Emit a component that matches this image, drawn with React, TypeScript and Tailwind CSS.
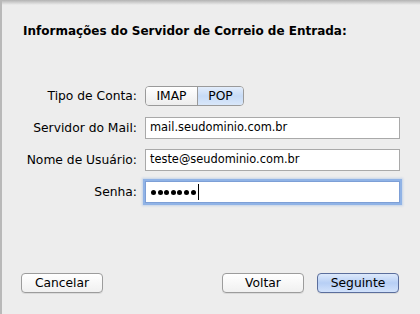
import React from "react";

const font = { fontFamily: '"DejaVu Sans", "Lucida Grande", sans-serif' };

function Field({ label, children }: { label: string; children: React.ReactNode }) {
  return (
    <div className="flex items-center h-[22px]">
      <div className="w-[143px] text-right pr-[8px] text-[12.3px] text-black shrink-0">{label}</div>
      {children}
    </div>
  );
}

function Btn({ children, primary }: { children: React.ReactNode; primary?: boolean }) {
  return (
    <div
      className={
        "w-[82px] h-[20px] rounded-[4px] border flex items-center justify-center text-[12.3px] text-black shadow-[0_1px_0_rgba(0,0,0,0.08)] " +
        (primary
          ? "border-[#5b6e9c] bg-gradient-to-b from-[#dde9fb] via-[#b7cff5] to-[#d2e2fb]"
          : "border-[#9c9c9c] bg-gradient-to-b from-[#ffffff] to-[#f0f0f0]")
      }
    >
      {children}
    </div>
  );
}

function Input({ children, focus }: { children: React.ReactNode; focus?: boolean }) {
  return (
    <div
      className={
        "w-[255px] h-[22px] bg-white border flex items-center pl-[4px] text-[11.4px] text-black " +
        (focus ? "border-[#7d9fd6] shadow-[0_0_0_2px_#90b3e6,0_0_2px_3px_rgba(120,160,220,0.35)]" : "border-[#a9a9a9]")
      }
    >
      {children}
    </div>
  );
}

export default function App() {
  return (
    <div className="w-[420px] h-[314px] bg-[#ededed] relative overflow-hidden border-l-2 border-[#b9b9b9]" style={font}>
      <div className="absolute left-0 right-0 top-0 h-[5px] bg-gradient-to-b from-[#9a9a9a] to-transparent opacity-70" />
      <div className="pl-[21px] pt-[24px] text-[12px] font-bold text-black leading-[14px]">
        Informações do Servidor de Correio de Entrada:
      </div>
      <div className="flex flex-col mt-[47px] gap-[10px]">
        <Field label="Tipo de Conta:">
          <div className="flex h-[20px] rounded-[4px] border border-[#9a9a9a] overflow-hidden text-[12.3px] text-black">
            <div className="w-[52px] flex items-center justify-center bg-gradient-to-b from-[#ffffff] to-[#ededed] border-r border-[#9a9a9a]">IMAP</div>
            <div className="w-[45px] flex items-center justify-center bg-gradient-to-b from-[#e3edfb] via-[#c7dbf6] to-[#d9e7fa]">POP</div>
          </div>
        </Field>
        <Field label="Servidor do Mail:">
          <Input>mail.seudominio.com.br</Input>
        </Field>
        <Field label="Nome de Usuário:">
          <Input>teste@seudominio.com.br</Input>
        </Field>
        <Field label="Senha:">
          <Input focus>
            <div className="flex gap-[1.6px] pl-[1px]">
              {[0, 1, 2, 3, 4, 5, 6].map((i) => (
                <span key={i} className="w-[5px] h-[5px] rounded-full bg-black" />
              ))}
            </div>
            <span className="w-px h-[16px] bg-black ml-[2px]" />
          </Input>
        </Field>
      </div>
      <div className="absolute left-[19px] right-[21px] top-[273px] flex">
        <Btn>Cancelar</Btn>
        <div className="flex-1" />
        <Btn>Voltar</Btn>
        <div className="w-[13px]" />
        <Btn primary>Seguinte</Btn>
      </div>
    </div>
  );
}
